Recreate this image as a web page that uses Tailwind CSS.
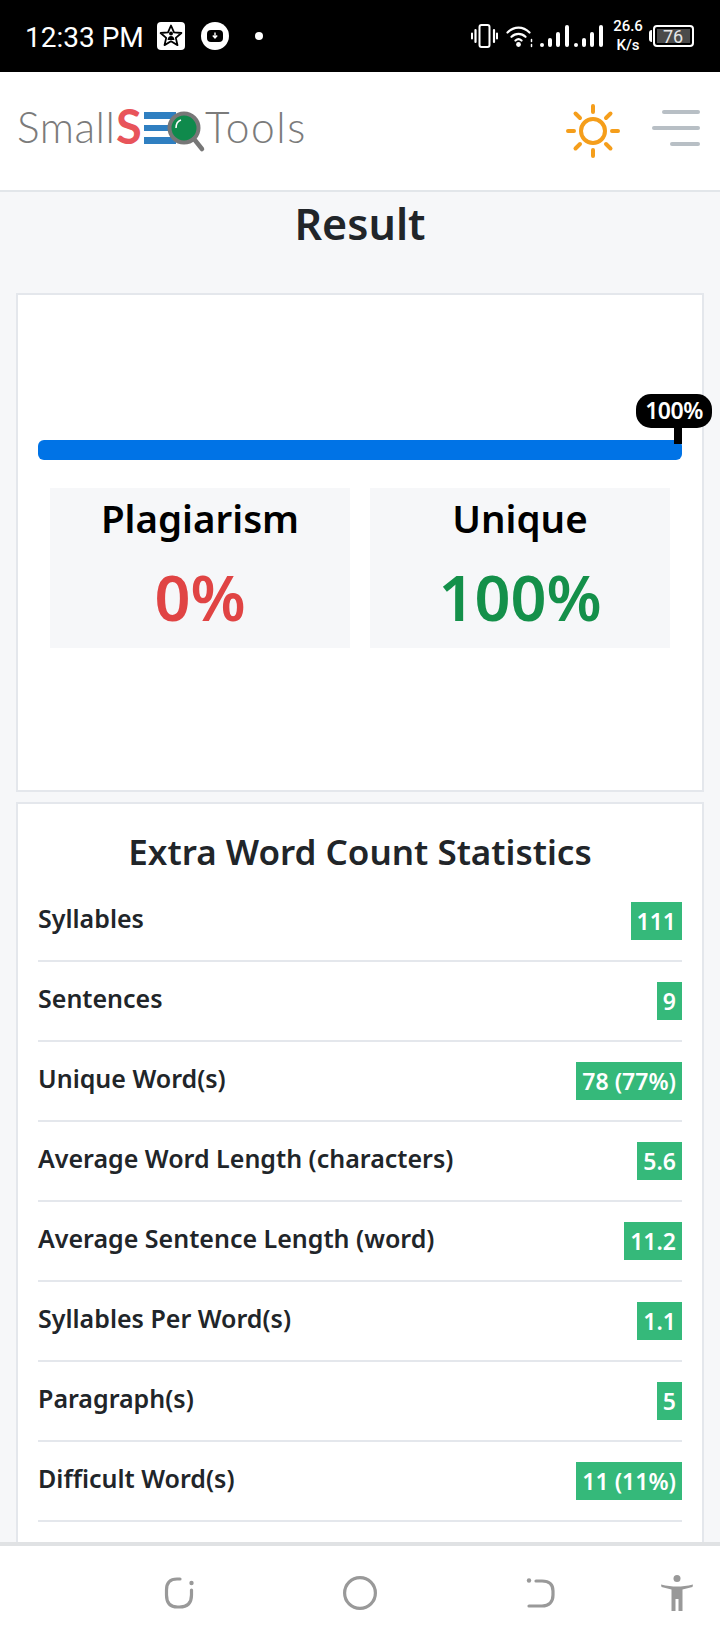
<!DOCTYPE html>
<html lang="en">
<head>
  <meta charset="UTF-8" />
  <meta name="viewport" content="width=device-width, initial-scale=1.0"/>
  <title>Result</title>
  <script src="https://cdn.jsdelivr.net/npm/@tailwindcss/browser@4"></script>
</head>
<body class="bg-[#f6f7f9] font-['Noto_Sans',sans-serif] text-[#212529]">
<div class="flex flex-col h-[1640px] overflow-hidden">

  <!-- Status bar -->
  <div class="h-[72px] shrink-0 bg-black text-white flex items-center font-['Roboto',sans-serif]">
    <span class="ml-[25px] w-[132px] pt-[3px] text-[28px] leading-none">12:33 PM</span>
    <svg class="w-[28px] h-[28px]" viewBox="0 0 28 28">
      <rect width="28" height="28" rx="4" fill="#fff"/>
      <path d="M14 3.500l3 6.800 7.400.7-5.600 4.900 1.700 7.200L14 19.300l-6.500 3.800 1.700-7.200L3.600 11l7.400-.7z" fill="none" stroke="#000" stroke-width="1.800" stroke-linejoin="round"/>
      <circle cx="14" cy="11.500" r="2" fill="#000"/>
      <path d="M10.500 18c.5-3 1.500-4 3.500-4s3 1 3.500 4z" fill="#000"/>
    </svg>
    <svg class="ml-[16px] w-[28px] h-[28px]" viewBox="0 0 28 28">
      <circle cx="14" cy="14" r="14" fill="#fff"/>
      <rect x="6" y="8" width="16" height="12" rx="4" fill="#000"/>
      <path d="M14 10.500v5M11.800 13.500l2.200 2.500 2.200-2.500" fill="none" stroke="#fff" stroke-width="1.400"/>
    </svg>
    <span class="ml-[26px] w-[8px] h-[8px] rounded-full bg-white"></span>

    <div class="ml-auto flex items-center">
      <svg class="w-[27px] h-[24px]" viewBox="0 0 27 24" fill="none" stroke="#fff" stroke-linecap="round">
        <rect x="8.500" y="1" width="10" height="22" rx="2" stroke-width="2"/>
        <path d="M4.500 6v12M23 6v12" stroke-width="2.200"/>
        <path d="M1 9.500v5M26 9.500v5" stroke-width="2"/>
      </svg>
      <svg class="ml-[8px] w-[28px] h-[24px]" viewBox="0 0 28 24" fill="none" stroke="#fff" stroke-linecap="round">
        <path d="M1.500 8.500c6.500-6.500 15.500-6.500 22 0M5.500 12.800c4-4 10-4 14 0M9.500 16.500c2-1.800 4-1.800 6 0" stroke-width="2.200"/>
        <circle cx="12.500" cy="20.500" r="2.400" fill="#fff" stroke="none"/>
        <path d="M25.500 15.500v2M25.500 20.500v2" stroke-width="1.500"/>
      </svg>
      <svg class="ml-[6px] w-[29px] h-[22px]" viewBox="0 0 29 22" fill="#fff">
        <rect x="0" y="18" width="4" height="4" rx="2"/>
        <rect x="8" y="13" width="4" height="9" rx="2"/>
        <rect x="16" y="7" width="4" height="15" rx="2"/>
        <rect x="25" y="0" width="4" height="22" rx="2"/>
      </svg>
      <svg class="ml-[5px] w-[29px] h-[22px]" viewBox="0 0 29 22" fill="#fff">
        <rect x="0" y="18" width="4" height="4" rx="2"/>
        <rect x="8" y="13" width="4" height="9" rx="2"/>
        <rect x="16" y="7" width="4" height="15" rx="2"/>
        <rect x="25" y="0" width="4" height="22" rx="2"/>
      </svg>
      <div class="ml-[9px] w-[32px] flex flex-col items-center text-[15px] leading-[19px] font-medium">
        <span>26.6</span>
        <span>K/s</span>
      </div>
      <div class="ml-[5px] w-[3px] h-[12px] rounded-l-sm bg-white"></div>
      <div class="ml-[1px] mr-[26px] w-[41px] h-[22px] border-2 border-white rounded-[4px] p-[2px] flex">
        <div class="w-full bg-[#4a4a4a] text-[#e6e6e6] text-[18px] leading-[15px] pl-[6px]">76</div>
      </div>
    </div>
  </div>

  <!-- Header -->
  <header class="h-[120px] shrink-0 bg-white border-b-2 border-[#e2e6ea] flex items-center">
    <div class="ml-[17px] mt-[-8px] flex items-end h-[50px] font-['Lato',sans-serif] font-light text-[#7b7b7b] text-[42.5px] leading-[50px]">
      <span class="w-[99px] tracking-[0.5px]">Small</span>
      <span class="w-[28px] font-bold text-[#e8545a] text-[47px] leading-[50px] mb-[1px]">S</span>
      <div class="flex flex-col justify-between w-[32px] h-[32px] mb-[8px]">
        <div class="h-[7px] bg-[#2f7fc1]"></div>
        <div class="h-[6px] bg-[#2f7fc1]"></div>
        <div class="h-[7px] bg-[#2f7fc1]"></div>
      </div>
      <svg class="ml-[-10px] w-[44px] h-[50px] mb-[-8px]" viewBox="0 0 44 50" fill="none">
        <circle cx="18" cy="18" r="14.500" fill="#0f8a4c" stroke="#777" stroke-width="4"/>
        <path d="M10 18c0-4 2-7 5-8" stroke="#fff" stroke-width="1.500"/>
        <path d="M28 29l8 10" stroke="#777" stroke-width="4.500" stroke-linecap="round"/>
      </svg>
      <span class="ml-[-5px] tracking-[1.500px]">Tools</span>
    </div>

    <svg class="ml-auto w-[54px] h-[54px]" viewBox="0 0 54 54" fill="none" stroke="#f59e1b" stroke-width="4" stroke-linecap="round">
      <circle cx="27" cy="27" r="12"/>
      <path d="M27 2v6M27 46v6M2 27h6M46 27h6M9.500 9.500l4.500 4.500M40 40l4.500 4.500M9.500 44.500L14 40M40 14l4.500-4.500"/>
    </svg>
    <div class="ml-[32px] mr-[20px] w-[48px] flex flex-col items-end gap-[12px] mt-[-6px]">
      <div class="w-[38px] h-[4px] rounded-full bg-[#b8bfc5]"></div>
      <div class="w-[48px] h-[4px] rounded-full bg-[#b8bfc5]"></div>
      <div class="w-[30px] h-[4px] rounded-full bg-[#b8bfc5]"></div>
    </div>
  </header>

  <!-- Main content -->
  <main class="flex-1 min-h-0 overflow-hidden px-[16px]">
    <h1 class="h-[101px] pt-[7px] text-center text-[43px] leading-[50px] font-semibold">Result</h1>

    <section class="relative h-[499px] bg-white border-2 border-[#e4e7ec] px-[20px] pt-[145px]">
      <div class="relative h-[20px] rounded-[6px] bg-[#0073e6]">
        <div class="absolute right-0 top-[-12px] w-[8px] h-[16px] bg-black"></div>
        <div class="absolute left-[598px] top-[-46px] w-[76px] h-[34px] rounded-[15px] bg-black text-white text-[23px] leading-[33px] font-semibold text-center tracking-[-0.5px]">100%</div>
      </div>
      <div class="mt-[28px] mx-[12px] grid grid-cols-2 gap-[20px]">
        <div class="h-[160px] bg-[#f6f7f9] text-center pt-[6px]">
          <div class="text-[38.5px] leading-[48px] font-semibold text-black">Plagiarism</div>
          <div class="mt-[20px] text-[63px] leading-[70px] font-semibold text-[#e04444]">0%</div>
        </div>
        <div class="h-[160px] bg-[#f6f7f9] text-center pt-[6px]">
          <div class="text-[38.5px] leading-[48px] font-semibold text-black">Unique</div>
          <div class="mt-[20px] text-[63px] leading-[70px] font-semibold text-[#14904a]">100%</div>
        </div>
      </div>
    </section>

    <section class="mt-[10px] h-[800px] bg-white border-2 border-[#e4e7ec] px-[20px]">
      <h2 class="h-[78px] pt-[23px] text-center text-[35px] leading-[50px] font-semibold">Extra Word Count Statistics</h2>
      <ul>
        <li class="h-[80px] flex items-center justify-between border-b-2 border-[#e4e7ec]">
          <span class="text-[25px] font-semibold mt-[-4px]">Syllables</span>
          <span class="h-[38px] px-[6px] bg-[#35b97a] text-white text-[23px] leading-[38px] font-semibold">111</span>
        </li>
        <li class="h-[80px] flex items-center justify-between border-b-2 border-[#e4e7ec]">
          <span class="text-[25px] font-semibold mt-[-4px]">Sentences</span>
          <span class="h-[38px] px-[6px] bg-[#35b97a] text-white text-[23px] leading-[38px] font-semibold">9</span>
        </li>
        <li class="h-[80px] flex items-center justify-between border-b-2 border-[#e4e7ec]">
          <span class="text-[25px] font-semibold mt-[-4px]">Unique Word(s)</span>
          <span class="h-[38px] px-[6px] bg-[#35b97a] text-white text-[23px] leading-[38px] font-semibold">78 (77%)</span>
        </li>
        <li class="h-[80px] flex items-center justify-between border-b-2 border-[#e4e7ec]">
          <span class="text-[25px] font-semibold mt-[-4px]">Average Word Length (characters)</span>
          <span class="h-[38px] px-[6px] bg-[#35b97a] text-white text-[23px] leading-[38px] font-semibold">5.6</span>
        </li>
        <li class="h-[80px] flex items-center justify-between border-b-2 border-[#e4e7ec]">
          <span class="text-[25px] font-semibold mt-[-4px]">Average Sentence Length (word)</span>
          <span class="h-[38px] px-[6px] bg-[#35b97a] text-white text-[23px] leading-[38px] font-semibold">11.2</span>
        </li>
        <li class="h-[80px] flex items-center justify-between border-b-2 border-[#e4e7ec]">
          <span class="text-[25px] font-semibold mt-[-4px]">Syllables Per Word(s)</span>
          <span class="h-[38px] px-[6px] bg-[#35b97a] text-white text-[23px] leading-[38px] font-semibold">1.1</span>
        </li>
        <li class="h-[80px] flex items-center justify-between border-b-2 border-[#e4e7ec]">
          <span class="text-[25px] font-semibold mt-[-4px]">Paragraph(s)</span>
          <span class="h-[38px] px-[6px] bg-[#35b97a] text-white text-[23px] leading-[38px] font-semibold">5</span>
        </li>
        <li class="h-[80px] flex items-center justify-between border-b-2 border-[#e4e7ec]">
          <span class="text-[25px] font-semibold mt-[-4px]">Difficult Word(s)</span>
          <span class="h-[38px] px-[6px] bg-[#35b97a] text-white text-[23px] leading-[38px] font-semibold">11 (11%)</span>
        </li>
      </ul>
    </section>
  </main>

  <!-- Bottom nav -->
  <nav class="relative h-[98px] shrink-0 bg-white border-t-4 border-[#e0e2e4]">
    <div class="flex items-center h-full">
      <svg class="ml-[163px] w-[34px] h-[34px]" viewBox="0 0 34 34" fill="none" stroke="#999" stroke-width="3.200" stroke-linecap="round">
        <path d="M17 3h-3C7 3 3.500 7 3.500 14v5c0 8 4 12 11 12h2c8 0 12-4 12-12v-5"/>
        <circle cx="28.500" cy="7" r="2.200" fill="#999" stroke="none"/>
      </svg>
      <svg class="ml-[146px] w-[34px] h-[36px]" viewBox="0 0 34 36" fill="none" stroke="#999" stroke-width="3.200">
        <circle cx="17" cy="18" r="15.400"/>
      </svg>
      <svg class="ml-[149px] w-[30px] h-[32px]" viewBox="0 0 30 32" fill="none" stroke="#999" stroke-width="3.200" stroke-linecap="round">
        <path d="M10 4h6c8 0 11 4 11 10v4c0 7-4 11-11 11H3"/>
        <circle cx="3" cy="3.500" r="2.200" fill="#999" stroke="none"/>
      </svg>
      <svg class="ml-[105px] w-[32px] h-[36px]" viewBox="0 0 32 36" fill="#999">
        <circle cx="16" cy="3.500" r="3.500"/>
        <path d="M0 9.500l.5 2.500 10 2.500V36h4V24h3v12h4V14.500l10-2.500.500-2.500C26 11 21 11.500 16 11.500S6 11 0 9.500z"/>
      </svg>
    </div>
  </nav>

</div>
</body>
</html>
